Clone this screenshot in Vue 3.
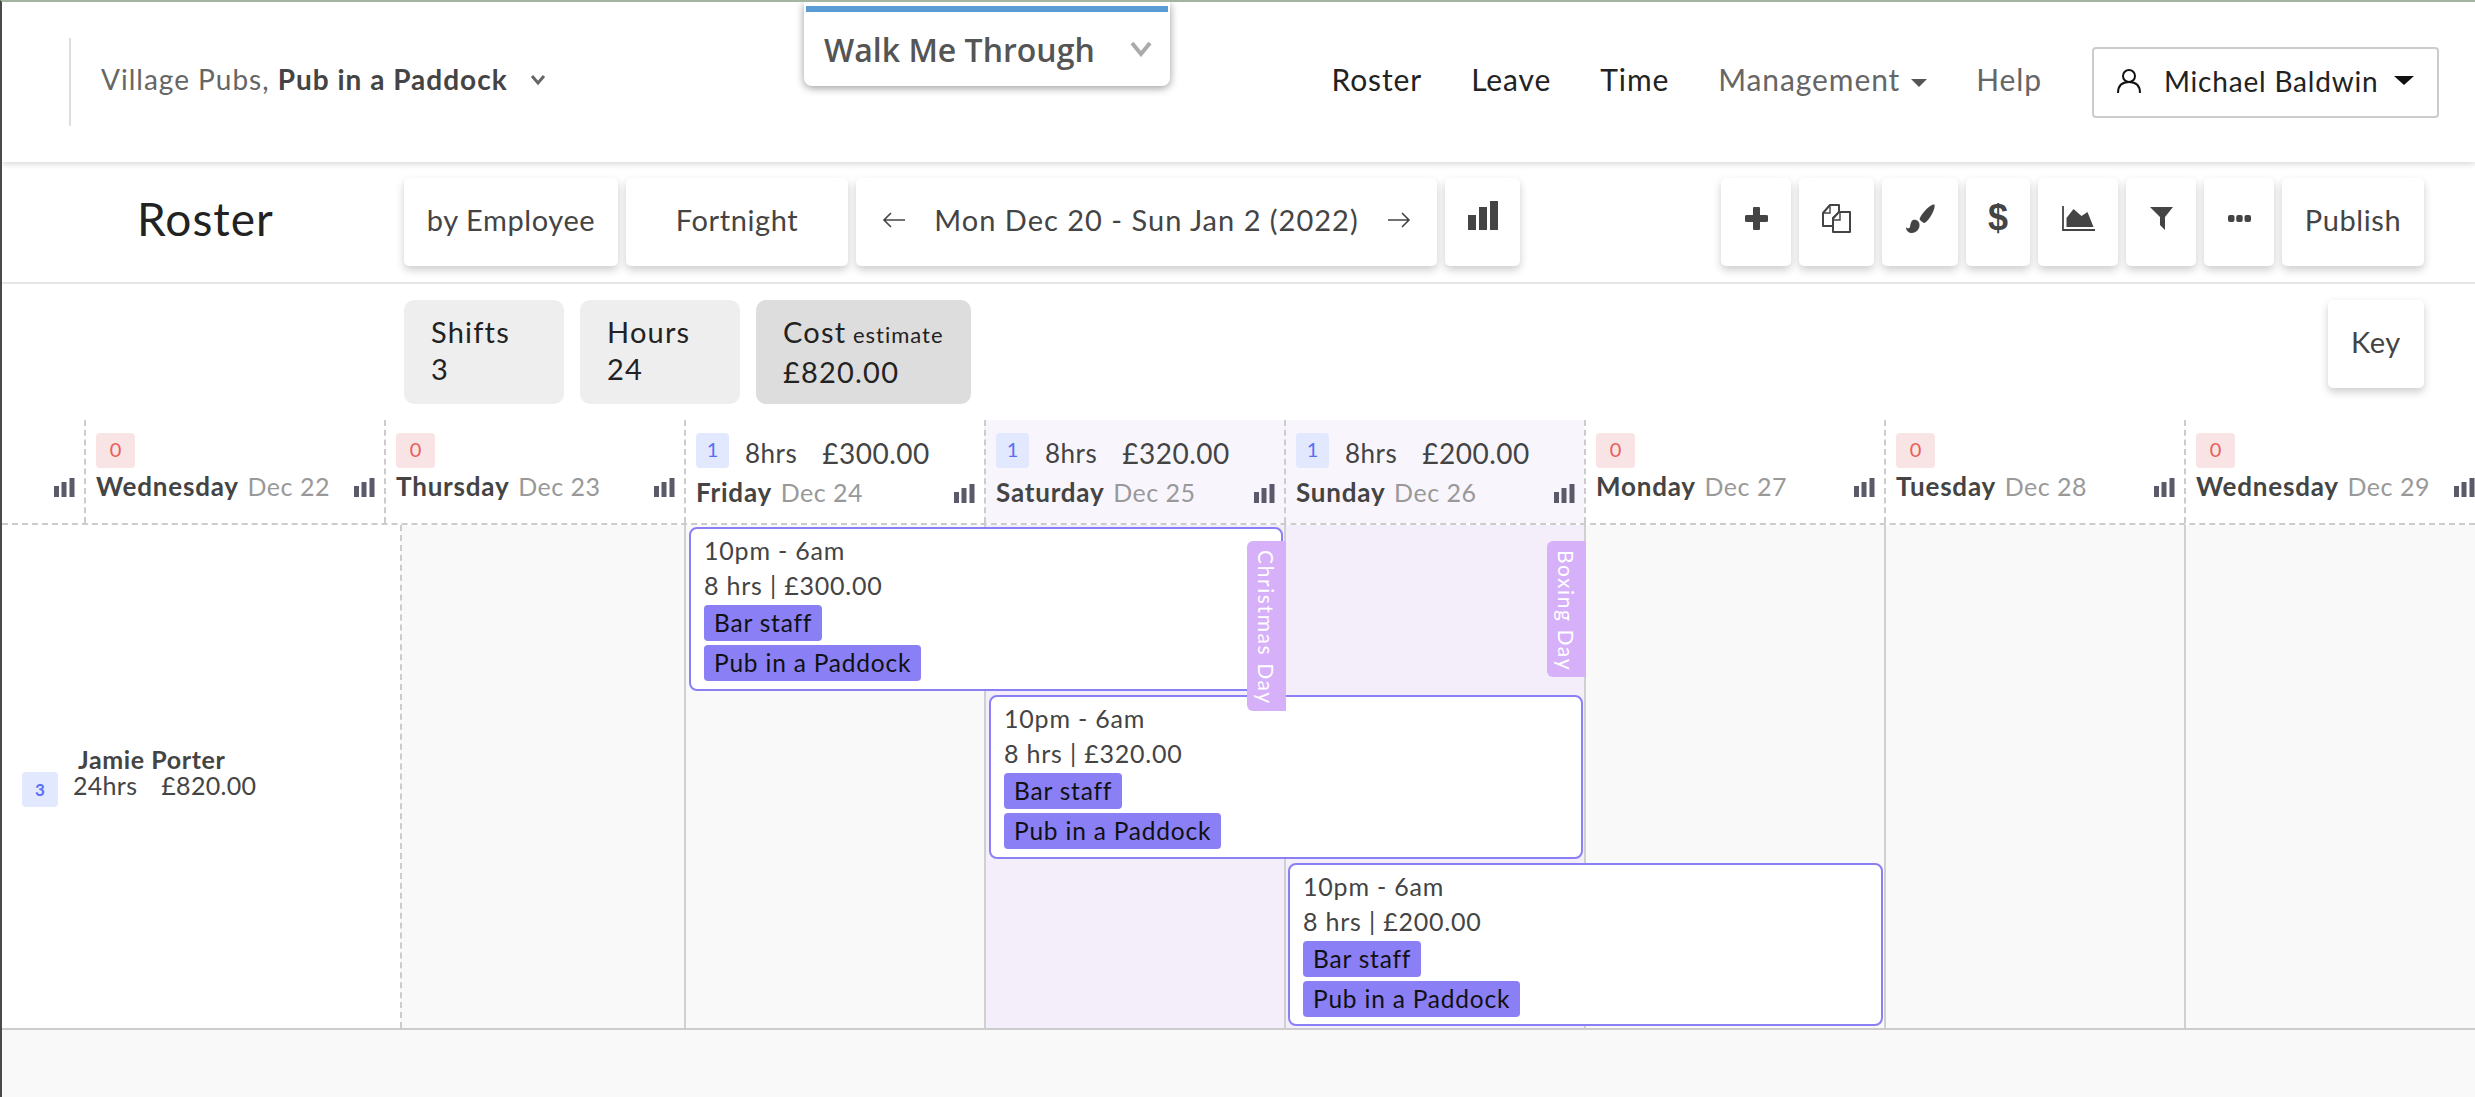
<script setup>
const navItems = [
  { label: 'Roster' },
  { label: 'Leave' },
  { label: 'Time' },
  { label: 'Management', muted: true, caret: true },
  { label: 'Help', muted: true }
]
const days = [
  { partial: true },
  { name: 'Wednesday', date: 'Dec 22', count: 0 },
  { name: 'Thursday', date: 'Dec 23', count: 0 },
  { name: 'Friday', date: 'Dec 24', count: 1, hrs: '8hrs', cost: '£300.00' },
  { name: 'Saturday', date: 'Dec 25', count: 1, hrs: '8hrs', cost: '£320.00', weekend: true },
  { name: 'Sunday', date: 'Dec 26', count: 1, hrs: '8hrs', cost: '£200.00', weekend: true },
  { name: 'Monday', date: 'Dec 27', count: 0 },
  { name: 'Tuesday', date: 'Dec 28', count: 0 },
  { name: 'Wednesday', date: 'Dec 29', count: 0 }
]
const cols = [
  { key: 'thu', cls: 'dashed' },
  { key: 'fri' },
  { key: 'sat', cls: 'weekend', holiday: 'Christmas Day' },
  { key: 'sun', cls: 'weekend', holiday: 'Boxing Day' },
  { key: 'mon' },
  { key: 'tue' },
  { key: 'wed' }
]
const shifts = [
  { cost: '£300.00', cls: 's1' },
  { cost: '£320.00', cls: 's2' },
  { cost: '£200.00', cls: 's3' }
]
</script>

<template>
  <div class="page">
    <header class="topbar">
      <div class="brand">
        <span class="brand-text">Village Pubs, <b>Pub in a Paddock</b></span>
        <svg class="chev" viewBox="0 0 16 12"><path d="M2 2l6 7 6-7" fill="none" stroke="#666" stroke-width="3" /></svg>
      </div>
      <nav class="nav">
        <a v-for="n in navItems" :key="n.label" :class="{ muted: n.muted }">
          {{ n.label }}<i v-if="n.caret" class="caret"></i>
        </a>
      </nav>
      <div class="user">
        <svg class="person" viewBox="0 0 26 26"><circle cx="13" cy="8" r="6" fill="none" stroke="#111" stroke-width="2" /><path d="M2 25c0-7 4-11 11-11s11 4 11 11" fill="none" stroke="#111" stroke-width="2" /></svg>
        <span>Michael Baldwin</span>
        <i class="caret dark"></i>
      </div>
      <div class="walk">
        <div class="walk-bar"></div>
        <div class="walk-row">
          <span>Walk Me Through</span>
          <svg viewBox="0 0 22 16"><path d="M2 2l9 11 9-11" fill="none" stroke="#aaa" stroke-width="4" /></svg>
        </div>
      </div>
    </header>

    <section class="toolbar">
      <h1 class="title">Roster</h1>
      <div class="btn txt w-emp">by Employee</div>
      <div class="btn txt w-fort">Fortnight</div>
      <div class="btn txt w-date">
        <svg class="arrow" viewBox="0 0 24 18"><path d="M23 9H2M9 2L2 9l7 7" fill="none" stroke="#444" stroke-width="1.6" /></svg>
        <span>Mon Dec 20 - Sun Jan 2 (2022)</span>
        <svg class="arrow" viewBox="0 0 24 18"><path d="M1 9h21M15 2l7 7-7 7" fill="none" stroke="#444" stroke-width="1.6" /></svg>
      </div>
      <div class="btn w-bars">
        <svg viewBox="0 0 30 29" width="30" height="29"><path d="M0 14h8v15H0zM11 6h8v23h-8zM22 0h8v29h-8z" fill="#444" /></svg>
      </div>
      <div class="tools">
        <div class="btn w-plus">
          <svg viewBox="0 0 23 23" width="23" height="23"><path d="M11.5 2v19M2 11.5h19" stroke="#444" stroke-width="7" stroke-linecap="round" /></svg>
        </div>
        <div class="btn w-copy">
          <svg viewBox="0 0 29 29" width="29" height="29"><path d="M8 1h9v7.5L11 14v8H1V9z" fill="#fff" stroke="#444" stroke-width="2" stroke-linejoin="round" /><path d="M8 2v7H1.5" fill="none" stroke="#444" stroke-width="1.4" /><path d="M17 8h11v20H11V14.5z" fill="#fff" stroke="#444" stroke-width="2" stroke-linejoin="round" /><path d="M18 9v7h-6.5" fill="none" stroke="#444" stroke-width="1.4" /></svg>
        </div>
        <div class="btn w-brush">
          <svg viewBox="0 0 29 29" width="29" height="29"><path d="M28.500 .5c.8 3-1.500 8-4 12-2 3-4 5.500-6 6.500-2-.5-4-2-5-4 1-3 4-7 7-10 3-3 6.500-5 8-4.500z" fill="#444" /><path d="M7 16c4-1 7 2 6.500 6-.5 4-4 7-7.500 7-3 0-6-2-6-6 1 1.500 3 2 4 0 .5-3 1-6 3-7z" fill="#444" /></svg>
        </div>
        <div class="btn w-dollar"><span class="dollar">$</span></div>
        <div class="btn w-area">
          <svg viewBox="0 0 33 25" width="33" height="25"><path d="M1 0v24h32" fill="none" stroke="#444" stroke-width="1.800" /><path d="M4.500 21V12l7-9 8 7 6-4 6 15z" fill="#444" /></svg>
        </div>
        <div class="btn w-filter">
          <svg viewBox="0 0 23 23" width="23" height="23"><path d="M0 0h23l-8 10v13l-5-5v-8z" fill="#444" /></svg>
        </div>
        <div class="btn w-more">
          <svg viewBox="0 0 23 7" width="23" height="7"><rect width="6.500" height="7" rx="2" fill="#444" /><rect x="8.200" width="6.500" height="7" rx="2" fill="#444" /><rect x="16.500" width="6.500" height="7" rx="2" fill="#444" /></svg>
        </div>
        <div class="btn txt w-pub">Publish</div>
      </div>
    </section>

    <section class="stats">
      <div class="stat"><div>Shifts</div><div>3</div></div>
      <div class="stat"><div>Hours</div><div>24</div></div>
      <div class="stat cost"><div>Cost <small>estimate</small></div><div>£820.00</div></div>
      <div class="btn txt w-key">Key</div>
    </section>

    <section class="dayhead">
      <div v-for="(d, i) in days" :key="i" class="day" :class="{ partial: d.partial, weekend: d.weekend, filled: d.count }">
        <template v-if="!d.partial">
          <div class="day-top">
            <span class="count" :class="d.count ? 'blue' : 'red'">{{ d.count }}</span>
            <template v-if="d.count">
              <span class="hrs">{{ d.hrs }}</span>
              <span class="cost-v">{{ d.cost }}</span>
            </template>
          </div>
          <div class="day-name"><b>{{ d.name }}</b> <span>{{ d.date }}</span></div>
        </template>
        <svg class="mini" viewBox="0 0 21 19"><path d="M0 8h5v11H0zM7.500 4h5v15h-5zM15.500 0h5v19h-5z" fill="#5a5a6a" /></svg>
      </div>
    </section>

    <section class="grid">
      <div class="who">
        <span class="count blue sm">3</span>
        <div class="who-text">
          <b>Jamie Porter</b>
          <div class="who-sum"><span>24hrs</span><span>£820.00</span></div>
        </div>
      </div>
      <div v-for="c in cols" :key="c.key" class="col" :class="[c.key, c.cls]">
        <div v-if="c.holiday" class="holiday">{{ c.holiday }}</div>
      </div>
      <article v-for="s in shifts" :key="s.cls" class="shift" :class="s.cls">
        <div class="line">10pm - 6am</div>
        <div class="line">8 hrs | {{ s.cost }}</div>
        <div class="tag">Bar staff</div>
        <div class="tag">Pub in a Paddock</div>
      </article>
    </section>

    <div class="fill"></div>
  </div>
</template>

<style>
html, body { margin: 0; padding: 0; background: #fff; overflow: hidden; }
</style>

<style scoped>
.page {
  width: 2475px;
  height: 1097px;
  box-sizing: border-box;
  border-top: 2px solid #a3b5a0;
  border-left: 2px solid #4a4a4a;
  font-family: Lato, "Noto Sans", sans-serif;
  color: #444;
  display: flex;
  flex-direction: column;
  overflow: hidden;
  position: relative;
  background: #fff;
}
.topbar {
  height: 160px;
  flex: none;
  box-sizing: border-box;
  box-shadow: 0 2px 6px rgba(0, 0, 0, 0.16);
  display: flex;
  align-items: center;
  font-size: 30px;
  letter-spacing: 0.9px;
  position: relative;
  background: #fff;
}
.brand {
  margin-left: 67px;
  height: 88px;
  border-left: 2px solid #ddd;
  padding-left: 30px;
  display: flex;
  align-items: center;
  gap: 22px;
  font-size: 28px;
  color: #666;
  letter-spacing: 1px;
}
.brand-text { margin-bottom: 6px; }
.brand .chev { margin-bottom: 4px; }
.brand b { color: #444; }
.chev { width: 16px; height: 12px; }
.nav {
  margin-left: auto;
  margin-bottom: 6px;
  display: flex;
  gap: 49px;
  color: #222;
  align-items: center;
}
.nav .muted { color: #666; }
.caret {
  display: inline-block;
  width: 0;
  height: 0;
  margin-left: 11px;
  vertical-align: middle;
  border-left: 8px solid transparent;
  border-right: 8px solid transparent;
  border-top: 8px solid #555;
}
.caret.dark { border-top-color: #111; border-left-width: 10px; border-right-width: 10px; border-top-width: 9px; margin-left: 16px; }
.user {
  margin-left: 50px;
  margin-right: 36px;
  width: 347px;
  height: 71px;
  box-sizing: border-box;
  border: 2px solid #ccc;
  border-radius: 4px;
  display: flex;
  align-items: center;
  padding: 0 0 3px 22px;
  color: #222;
  font-size: 28px;
  letter-spacing: 0.8px;
}
.person { width: 26px; height: 26px; margin-right: 22px; }
.walk {
  position: absolute;
  left: 802px;
  top: 0;
  width: 366px;
  height: 84px;
  box-sizing: border-box;
  padding: 4px 2px 0;
  background: #fff;
  border-radius: 0 0 8px 8px;
  box-shadow: 0 2px 8px rgba(0, 0, 0, 0.4);
  font-family: "Open Sans", sans-serif;
  font-size: 32px;
  font-weight: 600;
  letter-spacing: 0;
  color: #555;
  z-index: 3;
}
.walk-bar { height: 6px; background: #5b9bd5; }
.walk-row {
  display: flex;
  align-items: center;
  justify-content: space-between;
  padding: 0 16px 0 18px;
  height: 74px;
}
.walk-row svg { width: 22px; height: 16px; }
.toolbar {
  height: 122px;
  flex: none;
  box-sizing: border-box;
  border-bottom: 2px solid #e6e6e6;
  display: flex;
  gap: 8px;
  padding: 16px 51px 0 0;
  align-items: flex-start;
}
.title {
  margin: 0 -8px 0 0;
  width: 402px;
  box-sizing: border-box;
  padding-left: 135px;
  height: 88px;
  line-height: 82px;
  font-size: 46px;
  font-weight: 400;
  letter-spacing: 1px;
  color: #222;
}
.btn {
  height: 88px;
  flex: none;
  box-sizing: border-box;
  background: #fff;
  border-radius: 5px;
  box-shadow: 0 4px 8px rgba(0, 0, 0, 0.2);
  display: flex;
  align-items: center;
  justify-content: center;
  font-size: 29px;
  letter-spacing: 0.6px;
  color: #444;
}
.btn.txt { padding-bottom: 5px; }
.w-emp { width: 214px; }
.w-fort { width: 222px; }
.w-date { width: 581px; justify-content: space-between; padding: 0 26px; letter-spacing: 1px; }
.arrow { width: 24px; height: 18px; }
.w-bars { width: 75px; padding-bottom: 14px; }
.tools { margin-left: auto; display: flex; gap: 8px; }
.w-plus { width: 70px; }
.w-copy { width: 75px; }
.w-brush { width: 76px; }
.w-dollar { width: 64px; }
.w-area { width: 80px; }
.w-filter { width: 70px; }
.w-more { width: 70px; }
.w-pub { width: 142px; }
.tools .btn { padding-bottom: 8px; }
.tools .w-pub { padding-bottom: 5px; }
.dollar { font-family: "Liberation Sans", sans-serif; font-weight: 700; font-size: 36px; letter-spacing: 0; color: #444; }
.stats {
  height: 136px;
  flex: none;
  box-sizing: border-box;
  padding: 16px 51px 0 402px;
  display: flex;
  align-items: flex-start;
  gap: 16px;
}
.stat {
  width: 160px;
  height: 104px;
  box-sizing: border-box;
  background: #eee;
  border-radius: 10px;
  padding: 13px 0 0 27px;
  font-size: 29px;
  line-height: 37px;
  letter-spacing: 1.2px;
  color: #222;
}
.stat.cost { width: 215px; background: #ddd; }
.stat small { font-size: 22px; margin-left: -2px; letter-spacing: 1px; }
.w-key { width: 96px; margin-left: auto; }
.dayhead {
  height: 105px;
  flex: none;
  box-sizing: border-box;
  border-bottom: 2px dashed #ccc;
  display: flex;
}
.day {
  width: 300px;
  flex: none;
  box-sizing: border-box;
  border-left: 2px dashed #ccc;
  padding: 13px 0 0 10px;
  position: relative;
}
.day.partial { width: 82px; border-left: 0; }
.day.weekend { background: #f8f6fc; }
.day-top { display: flex; align-items: center; height: 35px; }
.count {
  width: 39px;
  height: 35px;
  border-radius: 4px;
  display: flex;
  align-items: center;
  justify-content: center;
  font-size: 20px;
  padding-bottom: 4px;
  box-sizing: border-box;
  flex: none;
}
.count.red { background: #f8e4e4; color: #e85d5d; }
.count.blue { background: #e2e8fd; color: #5b6ef5; width: 33px; }
.hrs { margin-left: 16px; font-size: 26px; letter-spacing: 0.5px; padding-top: 4px; }
.cost-v { margin-left: 25px; font-size: 28px; letter-spacing: 0.5px; padding-top: 4px; }
.day-name { margin-top: 1px; font-size: 26px; line-height: 34px; white-space: nowrap; }
.day.filled .day-name { margin-top: 7px; }
.day-name b { color: #444; letter-spacing: 0.8px; }
.day-name span { color: #999; margin-left: 2px; font-size: 25px; letter-spacing: 0.5px; }
.mini { position: absolute; right: 9px; top: 58px; width: 21px; height: 19px; }
.day.filled .mini { top: 64px; }
.grid {
  flex: none;
  height: 505px;
  box-sizing: border-box;
  border-bottom: 2px solid #ccc;
  display: grid;
  grid-template-columns: 398px 284px repeat(6, 300px);
  grid-template-rows: 168px 168px 167px;
}
.who {
  grid-column: 1;
  grid-row: 1 / 4;
  display: flex;
  align-items: flex-start;
  padding: 218px 0 0 20px;
  gap: 15px;
  background: #fff;
}
.count.sm { width: 36px; height: 35px; font-size: 17px; font-weight: 700; padding: 0; margin-top: 29px; }
.who-text { font-size: 25px; color: #444; }
.who-text b { display: block; margin-left: 5px; line-height: 32px; letter-spacing: 0.6px; }
.who-sum { display: flex; gap: 24px; line-height: 21px; letter-spacing: 0.3px; }
.col {
  grid-row: 1 / 4;
  box-sizing: border-box;
  border-left: 2px solid #d0d0d0;
  background: #f9f9f9;
  position: relative;
}
.col.dashed { border-left: 2px dashed #ccc; }
.col.weekend { background: #f3eefa; }
.thu { grid-column: 2; }
.fri { grid-column: 3; }
.sat { grid-column: 4; }
.sun { grid-column: 5; }
.mon { grid-column: 6; }
.tue { grid-column: 7; }
.wed { grid-column: 8; }
.holiday {
  position: absolute;
  top: 16px;
  right: -2px;
  width: 39px;
  box-sizing: border-box;
  padding: 9px 0 6px;
  background: #d7b0fa;
  color: #fff;
  border-radius: 6px 0 0 6px;
  writing-mode: vertical-rl;
  font-size: 21px;
  letter-spacing: 1.6px;
  line-height: 39px;
  z-index: 2;
  white-space: nowrap;
}
.shift {
  box-sizing: border-box;
  background: #fff;
  border: 2px solid #8a7ff5;
  border-radius: 8px;
  margin: 2px 1px 2px 5px;
  padding: 4px 13px 0;
  z-index: 1;
  font-size: 25px;
  letter-spacing: 0.8px;
  color: #444;
  display: flex;
  flex-direction: column;
  align-items: flex-start;
}
.s1 { grid-column: 3 / 5; grid-row: 1; }
.s2 { grid-column: 4 / 6; grid-row: 2; }
.s3 { grid-column: 5 / 7; grid-row: 3; margin-left: 4px; }
.line { height: 35px; line-height: 35px; }
.tag {
  height: 36px;
  line-height: 35px;
  padding: 0 10px;
  margin-bottom: 4px;
  border-radius: 4px;
  background: #8a7ff5;
  color: #111;
  font-size: 24.5px;
  letter-spacing: 0.8px;
}
.line + .tag { margin-top: 2px; }
.fill { flex: 1; background: #f9f9f9; }
</style>
